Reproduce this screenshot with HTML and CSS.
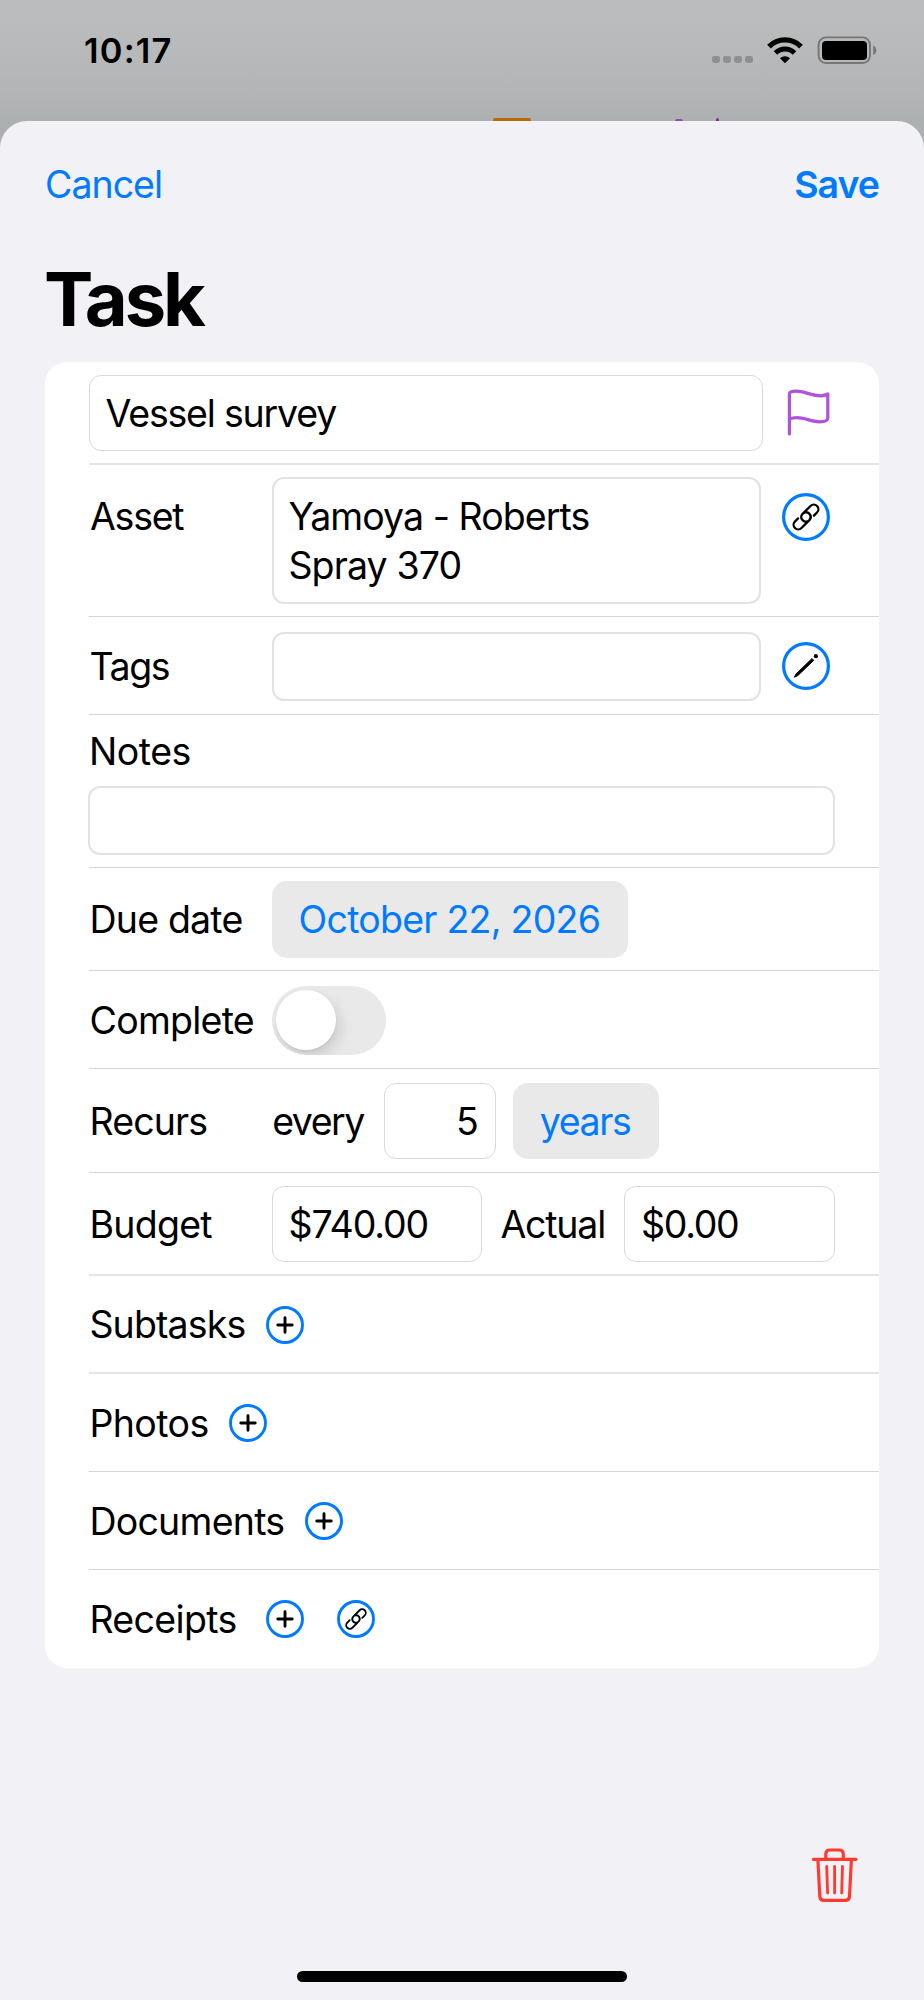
FILE: index.html
```html
<!DOCTYPE html>
<html lang="en">
<head>
<meta charset="utf-8">
<title>Task</title>
<link rel="stylesheet" href="styles.css">
</head>
<body>
<svg class="defs" width="0" height="0" aria-hidden="true">
  <defs>
    <symbol id="link" viewBox="-24 -24 48 48">
      <g transform="rotate(-45)" fill="none" stroke="#000" stroke-width="2.3" stroke-linecap="round">
        <path d="M-6.6 -4.6H-11A4.6 4.6 0 0 0 -11 4.6H0.2A4.6 4.6 0 0 0 2.4 -4"/>
        <path d="M6.6 4.6H11A4.6 4.6 0 0 0 11 -4.6H-0.2A4.6 4.6 0 0 0 -2.4 4"/>
      </g>
    </symbol>
    <symbol id="plus" viewBox="-19 -19 38 38">
      <circle r="17.5" fill="none" stroke="#007aff" stroke-width="2.9"/>
      <path d="M-7.2 0H7.2M0 -7.2V7.2" stroke="#000" stroke-width="2.9" stroke-linecap="round"/>
    </symbol>
  </defs>
</svg>
<div class="phone">
  <header class="status">
    <span class="clock">10:17</span>
    <div class="indicators">
      <div class="cell"><i></i><i></i><i></i><i></i></div>
      <svg class="wifi" width="38" height="28" viewBox="0 0 38 28">
        <path d="M3 10.6A22.3 22.3 0 0 1 35 10.6" fill="none" stroke="#000" stroke-width="5.2"/>
        <path d="M9.5 17A13.2 13.2 0 0 1 28.5 17" fill="none" stroke="#000" stroke-width="5"/>
        <path d="M19 27.2L14 22.2A7.2 7.2 0 0 1 24 22.2Z"/>
      </svg>
      <svg class="battery" width="60" height="28" viewBox="0 0 60 28">
        <rect x="1.6" y="1.4" width="51.4" height="25.6" rx="7.4" fill="none" stroke="#747677" stroke-width="1.9"/>
        <rect x="5" y="5" width="45" height="19" rx="4"/>
        <path d="M56.2 9.4Q59.3 10.8 59.3 14.2Q59.3 17.6 56.2 19Z" fill="#747677"/>
      </svg>
    </div>
    <i class="peek orange"></i><i class="peek arc"></i><i class="peek stem"></i>
  </header>

  <main class="sheet">
    <nav class="bar"><a class="cancel">Cancel</a><a class="save">Save</a></nav>
    <h1>Task</h1>
    <section class="card">
      <div class="row thick h103 name-row">
        <div class="field name"><span class="s-survey">Vessel survey</span></div>
        <svg class="flag" width="48" height="52" viewBox="0 0 48 52" fill="none" stroke="#af52de" stroke-width="3.2" stroke-linecap="round" stroke-linejoin="round">
          <path d="M4.4 46.9V7Q4.4 4.2 11.6 4.2C20 4.2 26 8.8 36 8.8Q40 8.6 42.8 7V31Q42.8 34.8 34.6 34.8C26 34.8 20 30.6 12 30.6Q7.6 30.6 4.6 32"/>
        </svg>
      </div>
      <div class="row asset-row">
        <span class="label s-asset">Asset</span>
        <div class="box asset"><span class="s-yamoya">Yamoya - Roberts</span><br><span class="s-spray">Spray 370</span></div>
        <svg class="round" width="48" height="48" viewBox="0 0 48 48"><circle cx="24" cy="24" r="22.4" fill="none" stroke="#007aff" stroke-width="3.2"/><use href="#link" width="48" height="48"/></svg>
      </div>
      <div class="row h98">
        <span class="label s-tags">Tags</span>
        <div class="box tags"></div>
        <svg class="round" width="48" height="48" viewBox="-24 -24 48 48"><circle r="22.4" fill="none" stroke="#007aff" stroke-width="3.2"/><path d="M-11.6 11.2L-10 7.9L6 -7.4L7.7 -5.6L-8.2 9.6Z" stroke="#000" stroke-width="1" stroke-linejoin="round"/><circle cx="9.9" cy="-9.8" r="2.1"/></svg>
      </div>
      <div class="row notes-row">
        <span class="s-notes">Notes</span>
        <div class="box notes"></div>
      </div>
      <div class="row h103 due-row">
        <span class="label s-due">Due date</span>
        <div class="pill date"><span class="s-date">October 22, 2026</span></div>
      </div>
      <div class="row h98">
        <span class="label s-complete">Complete</span>
        <div class="toggle"><i></i></div>
      </div>
      <div class="row h104">
        <span class="label s-recurs">Recurs</span>
        <span class="every s-every">every</span>
        <div class="field count">5</div>
        <div class="pill unit"><span class="s-years">years</span></div>
      </div>
      <div class="row thick h103">
        <span class="label s-budget">Budget</span>
        <div class="field money"><span class="s-740">$740.00</span></div>
        <span class="actual s-actual">Actual</span>
        <div class="field money"><span class="s-0">$0.00</span></div>
      </div>
      <div class="row thick h98"><span class="sub s-subtasks">Subtasks</span><svg class="add" width="38" height="38"><use href="#plus"/></svg></div>
      <div class="row h98"><span class="pho s-photos">Photos</span><svg class="add" width="38" height="38"><use href="#plus"/></svg></div>
      <div class="row h98"><span class="doc s-documents">Documents</span><svg class="add" width="38" height="38"><use href="#plus"/></svg></div>
      <div class="row h98 last"><span class="sub s-receipts">Receipts</span><svg class="add" width="38" height="38"><use href="#plus"/></svg><svg class="add second" width="38" height="38" viewBox="0 0 38 38"><circle cx="19" cy="19" r="17.5" fill="none" stroke="#007aff" stroke-width="2.9"/><use href="#link" width="38" height="38"/></svg></div>
    </section>

    <footer class="tools">
      <svg width="54" height="60" viewBox="0 0 54 60" fill="none" stroke="#ff3b30" stroke-width="3.2" stroke-linecap="round" stroke-linejoin="round">
        <path d="M5.4 14.3H48M17.8 14V9Q17.8 5 21.8 5H31.3Q35.3 5 35.3 9V14"/>
        <path d="M9.9 14.5L11.8 51.3Q12 55.3 16 55.3H37.4Q41.3 55.3 41.5 51.3L43.4 14.5"/>
        <path d="M18.7 21.3L19.6 48M26.6 21.3V48M34.5 21.3L33.7 48" stroke-width="2.8"/>
      </svg>
    </footer>
    <div class="home"></div>
  </main>
</div>
</body>
</html>
```

FILE: styles.css
```css
* { box-sizing: border-box; }
body { margin: 0; background: #f2f1f6; color: #000; font: 400 37.5px/49px Inter, "Liberation Sans", sans-serif; }
.defs { position: absolute; }
.phone { width: 924px; height: 2000px; overflow: hidden; background: #adb0b0; }

.status { position: relative; height: 120.5px; background: linear-gradient(#bcbdbf, #b6b7b9 60%, #adb0b0); display: flex; justify-content: space-between; align-items: flex-start; padding: 36px 47px 0 84px; }
.clock { font-size: 34.4px; font-weight: 600; line-height: 30px; letter-spacing: 1.2px; }
.indicators { display: flex; align-items: flex-start; }
.cell { display: flex; gap: 3.5px; padding-top: 20px; margin-right: 13px; }
.cell i { width: 7.6px; height: 7.4px; border-radius: 2.4px; background: #8f9092; }
.wifi { margin-right: 13px; }
.peek { position: absolute; bottom: 0; }
.orange { left: 493px; width: 37.5px; height: 2.8px; background: #b9690c; border-radius: 2px 2px 0 0; }
.arc { left: 675px; width: 8px; height: 1.2px; background: #8f4fae; border-radius: 4px 4px 0 0; }
.stem { left: 716px; width: 2.8px; height: 3px; background: #7f2fa3; border-radius: 2px 2px 0 0; }

.sheet { height: 1879.5px; background: #f2f1f6; border-radius: 27px 27px 0 0; padding: 0 45px; display: flex; flex-direction: column; }
.bar { height: 126px; display: flex; align-items: center; justify-content: space-between; color: #007aff; padding-top: 1px; }
.cancel { letter-spacing: -.98px; }
.save { font-weight: 600; letter-spacing: -1px; margin-right: 0; }
h1 { margin: 0 0 0 -1px; height: 115.5px; font-size: 74px; line-height: 105px; font-weight: 700; letter-spacing: -3.1px; }

.card { height: 1306px; flex: none; background: #fff; border-radius: 22px; padding-left: 44px; }
.row { display: flex; align-items: center; border-bottom: 1px solid #d5d5d6; white-space: nowrap; padding-top: 1.4px; }
.due-row { padding-top: 1px; }
.thick { border-bottom: 2px solid #e5e5e6; }
.last { border-bottom: 0; padding-top: .4px; }
.h98 { height: 98px; }
.h103 { height: 103px; }
.h104 { height: 104px; }
.label { width: 182.6px; padding-left: .5px; flex: none; }

.field { border: 1px solid #d9d9da; border-radius: 12px; height: 76px; padding: 0 16px; display: flex; align-items: center; }
.box { border: 2px solid #e2e2e2; border-radius: 12px; }
.name { width: 674px; }
.name-row .field { padding-left: 15.5px; }
.flag { margin-left: 21.5px; }
.asset-row { height: 152px; align-items: flex-start; padding-top: 11.5px; }
.asset-row .label { padding: 15.5px 0 0 1px; }
.asset { width: 489px; height: 127.5px; padding: 13.5px 14.8px; }
.asset-row .round { margin-top: 16.5px; }
.tags { width: 489px; height: 69px; }
.round { margin-left: 21.4px; }
.notes-row { height: 153px; flex-direction: column; align-items: flex-start; padding-top: 11.7px; }
.notes { width: 747px; height: 69px; margin: 10.8px 0 0 -.6px; flex: none; }

.pill { height: 76.5px; border-radius: 15px; background: #e9e9ea; color: #007aff; display: flex; align-items: center; }
.date { width: 356px; padding-left: 27px; }
.toggle { width: 114px; height: 69px; border-radius: 35px; background: #e9e9ea; padding: 4.2px; overflow: hidden; }
.toggle i { display: block; width: 60.5px; height: 60.5px; border-radius: 50%; background: #fff; box-shadow: 4px 7px 14px rgba(0,0,0,.13), 0 2px 2px rgba(0,0,0,.05); }
.every { width: 112.2px; padding-left: .6px; }
.count { width: 112px; justify-content: flex-end; }
.unit { width: 146px; margin-left: 17px; padding-left: 27px; }
.money { width: 210.5px; }
.actual { width: 142px; padding-left: 18.3px; }

.add { flex: none; }
.sub { width: 177.2px; }
.pho { width: 140.2px; }
.doc { width: 216px; }
.sub, .pho, .doc { padding-left: .4px; }
.second { margin-left: 33px; }

.tools { height: 303px; flex: none; display: flex; justify-content: flex-end; align-items: flex-end; padding: 0 17px 65.5px 0; }
.tools svg { margin-bottom: .5px; }
.home { width: 330px; height: 11px; border-radius: 6px; background: #000; margin-left: 252px; flex: none; }

.s-survey { letter-spacing: -1.2px; }
.s-asset { letter-spacing: -1.25px; }
.s-yamoya { letter-spacing: -.95px; }
.s-spray { letter-spacing: -.88px; }
.s-tags { letter-spacing: -1.4px; }
.s-notes { letter-spacing: -.5px; }
.s-due { letter-spacing: -.8px; }
.s-date { letter-spacing: -.76px; }
.s-complete { letter-spacing: -.75px; }
.s-recurs { letter-spacing: -.9px; }
.s-every { letter-spacing: -1.5px; }
.s-years { letter-spacing: -1.4px; }
.s-budget { letter-spacing: -.75px; }
.s-740 { letter-spacing: -1.09px; }
.s-actual { letter-spacing: -1.2px; }
.s-0 { letter-spacing: -1.32px; }
.s-subtasks { letter-spacing: -.87px; }
.s-photos { letter-spacing: -.6px; }
.s-documents { letter-spacing: -.75px; }
.s-receipts { letter-spacing: -.65px; }
```
